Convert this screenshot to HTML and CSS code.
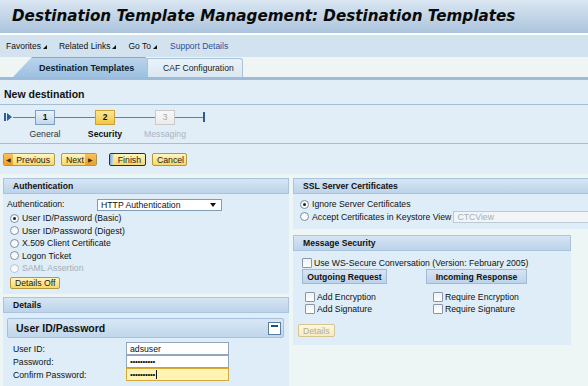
FILE: index.html
```html
<!DOCTYPE html>
<html lang="en">

<head>
    <meta charset="UTF-8">
    <meta name="viewport" content="width=device-width, initial-scale=1.0">
    <title>Destination Template Management</title>
    <link rel="stylesheet" href="styles.css">
</head>

<body>

    <div class="page-header">
        <h1 class="page-title">Destination Template Management: Destination Templates</h1>
    </div>

    <div class="menubar">
        <span class="menu-item">Favorites</span>
        <span class="menu-item">Related Links</span>
        <span class="menu-item">Go To</span>
        <span class="menu-link">Support Details</span>
    </div>

    <div class="tabstrip">
        <div class="tab tab-active">Destination Templates</div>
        <div class="tab">CAF Configuration</div>
    </div>

    <div class="wizard">
        <div class="wizard-title">New destination</div>

        <div class="roadmap">
            <div class="rm-start"><span class="rm-bar"></span><span class="rm-arrow"></span></div>
            <div class="rm-lead"></div>
            <div class="step step-done">
                <div class="step-track"><span class="step-box">1</span></div>
                <div class="step-label">General</div>
            </div>
            <div class="step step-current">
                <div class="step-track"><span class="step-box">2</span></div>
                <div class="step-label">Security</div>
            </div>
            <div class="step step-todo">
                <div class="step-track"><span class="step-box">3</span></div>
                <div class="step-label">Messaging</div>
            </div>
            <div class="rm-tail"></div>
            <div class="rm-end"></div>
        </div>

        <div class="wizard-buttons">
            <span class="btn btn-prev"><span class="btn-icon">&#9664;</span>Previous</span>
            <span class="btn btn-next">Next<span class="btn-icon">&#9654;</span></span>
            <span class="btn btn-finish"><span class="btn-stripe"></span>Finish</span>
            <span class="btn btn-cancel">Cancel</span>
        </div>
    </div>

    <div class="content">
        <div class="col col-left">
            <div class="panel">
                <div class="panel-head">Authentication</div>
                <div class="panel-body auth-body">
                    <div class="field-row">
                        <span class="field-label">Authentication:</span>
                        <span class="select">HTTP Authentication<span class="select-arrow"></span></span>
                    </div>
                    <div class="radio-row"><span class="radio checked"></span>User ID/Password (Basic)</div>
                    <div class="radio-row"><span class="radio"></span>User ID/Password (Digest)</div>
                    <div class="radio-row"><span class="radio"></span>X.509 Client Certificate</div>
                    <div class="radio-row"><span class="radio"></span>Logon Ticket</div>
                    <div class="radio-row disabled"><span class="radio"></span>SAML Assertion</div>
                    <span class="btn btn-small">Details Off</span>
                </div>
            </div>

            <div class="panel details-panel">
                <div class="panel-head">Details</div>
                <div class="panel-body details-body">
                    <div class="subpanel-head">
                        User ID/Password
                        <span class="minimize"></span>
                    </div>
                    <div class="form-row">
                        <span class="form-label">User ID:</span>
                        <span class="input">adsuser</span>
                    </div>
                    <div class="form-row">
                        <span class="form-label">Password:</span>
                        <span class="input input-pw">&#8226;&#8226;&#8226;&#8226;&#8226;&#8226;&#8226;&#8226;&#8226;&#8226;</span>
                    </div>
                    <div class="form-row">
                        <span class="form-label">Confirm Password:</span>
                        <span class="input input-pw input-focus">&#8226;&#8226;&#8226;&#8226;&#8226;&#8226;&#8226;&#8226;&#8226;&#8226;<span class="caret"></span></span>
                    </div>
                </div>
            </div>
        </div>

        <div class="col col-right">
            <div class="panel ssl-panel">
                <div class="panel-head">SSL Server Certificates</div>
                <div class="panel-body ssl-body">
                    <div class="radio-row"><span class="radio checked"></span>Ignore Server Certificates</div>
                    <div class="radio-row"><span class="radio"></span><span class="nowrap">Accept Certificates in Keystore View</span><span class="input input-disabled">CTCView</span></div>
                </div>
            </div>

            <div class="panel msg-panel">
                <div class="panel-head">Message Security</div>
                <div class="panel-body msg-body">
                    <div class="check-row ws-row"><span class="check"></span>Use WS-Secure Conversation (Version: February 2005)</div>
                    <div class="msg-columns">
                        <div class="msg-col">
                            <div class="group-head group-out">Outgoing Request</div>
                            <div class="check-row"><span class="check"></span>Add Encryption</div>
                            <div class="check-row"><span class="check"></span>Add Signature</div>
                        </div>
                        <div class="msg-col msg-col-in">
                            <div class="group-head group-in">Incoming Response</div>
                            <div class="check-row"><span class="check"></span>Require Encryption</div>
                            <div class="check-row"><span class="check"></span>Require Signature</div>
                        </div>
                    </div>
                    <span class="btn btn-small btn-disabled">Details</span>
                </div>
            </div>
        </div>
    </div>

</body>

</html>
```

FILE: styles.css
```css
body {
    margin: 0;
    width: 588px;
    height: 386px;
    overflow: hidden;
    font-family: "Liberation Sans", Arial, sans-serif;
    font-size: 8.7px;
    color: #111;
    background-color: #eef6f5;
}

/* title bar */
.page-header {
    height: 33px;
    background: linear-gradient(#dae6f1, #abc4dd);
    border-bottom: 2px solid #fff;
}

.page-title {
    margin: 0;
    padding: 6px 0 0 12px;
    font: italic bold 15.2px/20px "DejaVu Sans", Verdana, sans-serif;
    color: #0a0a0a;
    white-space: nowrap;
}

/* menu bar */
.menubar {
    height: 22px;
    display: flex;
    align-items: center;
    padding-left: 6px;
    background-color: #d3e2ef;
    font-size: 8.5px;
}

.menu-item {
    margin-right: 12px;
}

.menu-item::after {
    content: "";
    display: inline-block;
    width: 0;
    height: 0;
    margin-left: 2px;
    border-left: 4px solid transparent;
    border-bottom: 4px solid #111;
}

.menu-link {
    color: #2d4f9c;
    margin-left: 1px;
}

/* tabs */
.tabstrip {
    height: 20px;
    display: flex;
    align-items: flex-end;
    padding-left: 13px;
    background-color: #eef5f2;
    border-bottom: 3px solid #9ebcd9;
}

.tab {
    height: 19px;
    box-sizing: border-box;
    display: flex;
    align-items: center;
    padding: 0 8px 0 15px;
    background: linear-gradient(#e9f2f8, #dbe8f2);
    border: 1px solid #a9c3da;
    border-bottom: none;
    border-radius: 0 3px 0 0;
    font-size: 8.6px;
    color: #222;
}

.tab-active {
    width: 134px;
    height: 20px;
    padding: 0 0 0 26px;
    background: linear-gradient(#b9d3eb, #9dc1e3);
    border: none;
    border-top: 1px solid #86a9cc;
    clip-path: polygon(0 100%, 19px 0, 100% 0, 100% 100%);
    font-weight: bold;
    font-size: 9px;
    color: #0c1b2c;
}

/* wizard */
.wizard {
    background-color: #e1eef8;
    padding-bottom: 8px;
}

.wizard-title {
    padding: 7px 0 3px 4px;
    line-height: 14px;
    font-size: 10.5px;
    font-weight: bold;
    border-bottom: 1px solid #a7bdd2;
}

.roadmap {
    display: flex;
    align-items: flex-start;
    padding: 4px 0 3px 4px;
    border-bottom: 1px solid #a7bdd2;
}

.rm-start {
    width: 9px;
    height: 16px;
    display: flex;
    align-items: center;
}

.rm-bar {
    width: 2px;
    height: 8px;
    background-color: #2b5d94;
}

.rm-arrow {
    width: 0;
    height: 0;
    margin-left: 1px;
    border-top: 4px solid transparent;
    border-bottom: 4px solid transparent;
    border-left: 5px solid #2b5d94;
}

.rm-lead,
.rm-tail,
.step-track {
    height: 16px;
    background: linear-gradient(#5a7fa9, #5a7fa9) no-repeat 0 50% / 100% 1px;
}

.rm-lead {
    width: 2px;
}

.rm-tail {
    width: 8px;
}

.rm-end {
    width: 2px;
    height: 10px;
    margin-top: 3px;
    background-color: #2b5d94;
}

.step {
    width: 60px;
}

.step-track {
    display: flex;
    justify-content: center;
    align-items: center;
}

.step-box {
    width: 20px;
    height: 15px;
    box-sizing: border-box;
    display: flex;
    align-items: center;
    justify-content: center;
    font-size: 8.5px;
    font-weight: bold;
}

.step-done .step-box {
    background: linear-gradient(#e9f2fa, #c3d8ed);
    border: 1px solid #7f9fc2;
}

.step-current .step-box {
    background: linear-gradient(#fde78e, #f3c645);
    border: 1px solid #caa133;
}

.step-todo .step-box {
    background: linear-gradient(#f8f8f8, #ebebeb);
    border: 1px solid #cacaca;
    color: #a9a9a9;
    font-weight: normal;
}

.step-label {
    margin-top: 3px;
    line-height: 12px;
    text-align: center;
    color: #333;
}

.step-current .step-label {
    font-weight: bold;
    color: #111;
}

.step-todo .step-label {
    color: #aab4bf;
}

.wizard-buttons {
    display: flex;
    padding: 9px 0 0 3px;
}

/* buttons */
.btn {
    height: 13px;
    box-sizing: border-box;
    display: inline-flex;
    align-items: center;
    padding: 0 4px;
    background: linear-gradient(#fff5bd, #f6d86b);
    border: 1px solid #b39844;
    border-radius: 2px;
    color: #1a1a1a;
    overflow: hidden;
}

.btn-icon {
    align-self: stretch;
    display: flex;
    align-items: center;
    justify-content: center;
    width: 11px;
    background: linear-gradient(#f9c25c, #ee9f25);
    font-size: 6px;
    color: #3a2a10;
}

.btn-prev {
    width: 52px;
    padding-left: 0;
}

.btn-prev .btn-icon {
    margin-right: 3px;
}

.btn-next {
    width: 36px;
    margin-left: 6px;
    padding-right: 0;
    justify-content: space-between;
}

.btn-finish {
    width: 37px;
    margin-left: 12px;
    padding-left: 0;
    border-color: #27313c;
}

.btn-stripe {
    align-self: stretch;
    width: 5px;
    margin-right: 4px;
    background: linear-gradient(90deg, #7fa8d8, #d8e6f4);
}

.btn-cancel {
    width: 35px;
    margin-left: 6px;
}

.btn-small {
    height: 12px;
}

.btn-disabled {
    background: linear-gradient(#fdf8e2, #f5ebc4);
    border-color: #d6c58e;
    color: #b5ad8c;
}

/* content panels */
.content {
    display: flex;
    gap: 4px;
    padding: 4px 0 0 3px;
}

.col-left {
    width: 286px;
    flex-shrink: 0;
}

.col-right {
    width: 300px;
    flex-shrink: 0;
}

.panel-head {
    height: 16px;
    box-sizing: border-box;
    padding-left: 9px;
    display: flex;
    align-items: center;
    background: linear-gradient(#d6e5f3, #bcd3e9);
    border: 1px solid #a9c4de;
    font-weight: bold;
    font-size: 8.6px;
    color: #111;
}

.panel-body {
    background-color: #deedf7;
}

.auth-body {
    height: 100px;
    box-sizing: border-box;
    padding: 5px 4px 0;
}

.field-row {
    height: 13px;
    display: flex;
    align-items: flex-start;
}

.field-label {
    width: 90px;
}

.select {
    width: 125px;
    height: 12px;
    box-sizing: border-box;
    display: flex;
    align-items: center;
    justify-content: space-between;
    padding: 0 5px 0 3px;
    background-color: #fff;
    border: 1px solid #7f9db9;
}

.select-arrow {
    width: 0;
    height: 0;
    border-left: 3.5px solid transparent;
    border-right: 3.5px solid transparent;
    border-top: 4px solid #111;
}

.radio-row {
    height: 12.5px;
    display: flex;
    align-items: center;
    margin-left: 3px;
    white-space: nowrap;
}

.nowrap {
    white-space: nowrap;
    flex-shrink: 0;
}

.radio-row.disabled {
    color: #a4aeb8;
}

.radio {
    width: 9px;
    height: 9px;
    box-sizing: border-box;
    margin-right: 3px;
    border: 1px solid #7d8fa2;
    border-radius: 50%;
    background: linear-gradient(#f2f4f6, #fff);
    display: flex;
    align-items: center;
    justify-content: center;
    flex-shrink: 0;
}

.radio-row.disabled .radio {
    border-color: #b8c3cd;
}

.radio.checked::after {
    content: "";
    width: 3px;
    height: 3px;
    border-radius: 50%;
    background-color: #222;
}

.auth-body .btn-small {
    margin: 2px 0 0 3px;
}

.details-panel {
    margin-top: 3px;
}

.details-body {
    padding: 5px 5px 6px 4px;
}

.subpanel-head {
    height: 20px;
    box-sizing: border-box;
    display: flex;
    align-items: center;
    justify-content: space-between;
    padding: 0 2px 0 8px;
    background: linear-gradient(#d8e7f4, #c0d6eb);
    border: 1px solid #a7c1da;
    border-radius: 2px;
    font-weight: bold;
    font-size: 10.5px;
    color: #111;
}

.minimize {
    width: 13px;
    height: 13px;
    box-sizing: border-box;
    border: 1px solid #5a7da5;
    background: linear-gradient(#1d4f86, #1d4f86) no-repeat 2px 2px / 7px 2px, #fff;
}

.form-row {
    height: 13px;
    display: flex;
    align-items: center;
    padding-left: 6px;
}

.subpanel-head + .form-row {
    margin-top: 4px;
}

.form-label {
    width: 113px;
}

.input {
    width: 103px;
    height: 13px;
    box-sizing: border-box;
    display: flex;
    align-items: center;
    padding-left: 3px;
    background-color: #fff;
    border: 1px solid #8fa6bc;
    flex-shrink: 0;
}

.input-pw {
    font-size: 8px;
    letter-spacing: -0.3px;
}

.input-focus {
    background-color: #fff4b3;
    border-color: #d9a935;
}

.caret {
    width: 1px;
    height: 9px;
    margin-left: 1px;
    background-color: #111;
}

.ssl-body {
    padding: 4px 0 6px 4px;
}

.input-disabled {
    width: 150px;
    height: 12px;
    margin-left: 2px;
    background-color: #f1f5f8;
    border-color: #bccad6;
    color: #a3b0bc;
}

.msg-panel {
    width: 278px;
    margin-top: 6px;
}

.msg-body {
    padding: 6px 0 8px 5px;
}

.check-row {
    height: 12px;
    display: flex;
    align-items: center;
}

.check {
    width: 10px;
    height: 10px;
    box-sizing: border-box;
    margin-right: 2px;
    background: linear-gradient(#f0f2f4, #fff);
    border: 1px solid #8797a8;
    border-radius: 1px;
    flex-shrink: 0;
}

.ws-row {
    margin-left: 4px;
}

.msg-columns {
    display: flex;
    margin-left: 4px;
}

.msg-col {
    width: 124px;
}

.msg-col .check-row {
    margin-left: 3px;
}

.msg-col-in .check-row {
    margin-left: 7px;
}

.group-head {
    height: 15px;
    box-sizing: border-box;
    display: flex;
    align-items: center;
    justify-content: center;
    margin-bottom: 7px;
    background: linear-gradient(#d6e5f3, #bcd3e9);
    border: 1px solid #9fbad4;
    font-weight: bold;
    font-size: 8.6px;
}

.group-out {
    width: 85px;
}

.group-in {
    width: 101px;
}

.msg-body .btn-small {
    height: 13px;
    margin-top: 9px;
}
```
